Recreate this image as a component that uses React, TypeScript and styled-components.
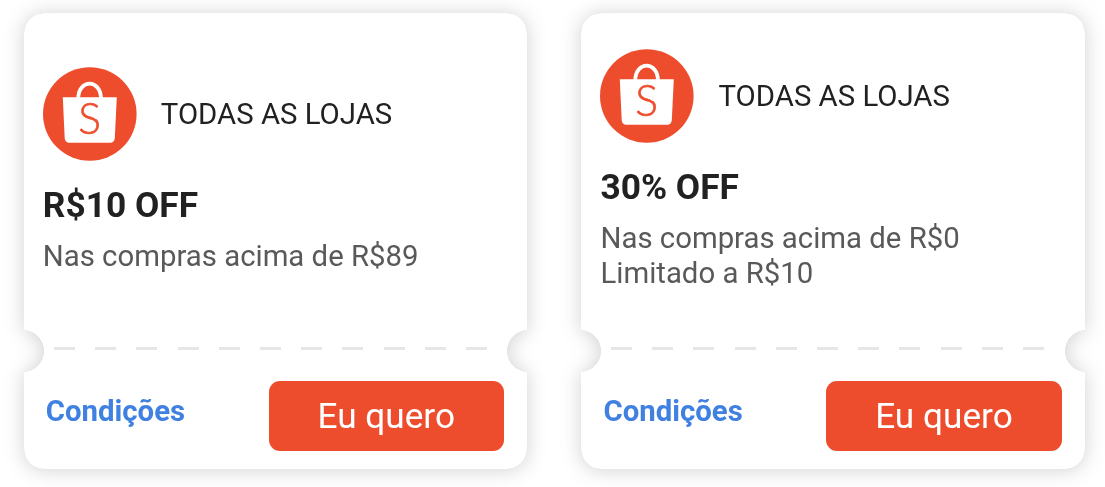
import React from 'react';
import styled, { createGlobalStyle } from 'styled-components'

interface Coupon {
    store: string;
    title: string;
    rules: string[];
}

const coupons: Coupon[] = [
    { store: 'TODAS AS LOJAS', title: 'R$10 OFF', rules: ['Nas compras acima de R$89'] },
    { store: 'TODAS AS LOJAS', title: '30% OFF', rules: ['Nas compras acima de R$0', 'Limitado a R$10'] },
];

const StoreLogo = () => (
    <Logo viewBox="0 0 94 94" aria-hidden="true">
        <circle cx="46.8" cy="47" r="46.8" fill="#ee4d2d" />
        <path d="M35.2 32 C35.2 11.5 58 11.5 58 32" fill="none" stroke="#fff" strokeWidth="3.8" />
        <path d="M19.8 30.3 H73.8 L71.8 71 Q71.5 75.7 67 75.7 H26.5 Q22 75.7 21.7 71 Z" fill="#fff" />
        <LogoLetter x="46.6" y="67.2" textAnchor="middle">S</LogoLetter>
    </Logo>
)

const CouponCard = ({ coupon }: { coupon: Coupon }) => (
    <Shadow>
        <Ticket>
            <Info>
                <Header>
                    <StoreLogo />
                    <Store>{coupon.store}</Store>
                </Header>
                <Title>{coupon.title}</Title>
                <Rules>
                    {coupon.rules.map((rule) => <Rule key={rule}>{rule}</Rule>)}
                </Rules>
            </Info>
            <Perforation />
            <Actions>
                <Conditions href="#">Condições</Conditions>
                <WantButton type="button">Eu quero</WantButton>
            </Actions>
        </Ticket>
    </Shadow>
)

const App = () => {
    return (
    <>
        <GlobalStyle />
        <Page>
            {coupons.map((coupon) => <CouponCard key={coupon.title} coupon={coupon} />)}
        </Page>
    </>
    );
  }

export default App;


const GlobalStyle = createGlobalStyle`
    *, *::before, *::after {
        box-sizing: border-box;
    }
    body {
        margin: 0;
        background-color: #fff;
        font-family: Roboto, sans-serif;
        overflow: hidden;
    }
`
const Page = styled.main`
    display: flex;
    gap: 54.3px;
    height: 487px;
    padding: 12.5px 20px 0 23.8px;
`
const Shadow = styled.article`
    width: 503.4px;
    height: 456.5px;
    flex-shrink: 0;
    filter: drop-shadow(0 0.5px 0.5px rgba(0, 0, 0, 0.16)) drop-shadow(0 1px 10px rgba(0, 0, 0, 0.18));
`
const Ticket = styled.div`
    display: flex;
    flex-direction: column;
    height: 100%;
    border-radius: 20px;
    background-color: #fff;
    /* round bites on both sides, level with the perforation */
    mask-image:
        radial-gradient(circle at -1px 338px, transparent 20.5px, #000 21.2px),
        radial-gradient(circle at calc(100% + 1px) 338px, transparent 20.5px, #000 21.2px);
    mask-composite: intersect;
`
const Info = styled.div`
    display: flex;
    flex-direction: column;
    justify-content: center;
    height: 334.5px;
    padding: 0 19px 18.8px;
`
const Header = styled.div`
    display: flex;
    align-items: center;
    gap: 24px;
`
const Logo = styled.svg`
    display: block;
    width: 94px;
    height: 94px;
`
const LogoLetter = styled.text`
    font-family: Lato, sans-serif;
    font-size: 42.5px;
    font-weight: 300;
    fill: #ee4d2d;
    stroke: #ee4d2d;
    stroke-width: 0.6px;
`
const Store = styled.span`
    color: #212121;
    font-size: 29.35px;
    line-height: 34px;
`
const Title = styled.h2`
    margin: 24px 0 0;
    color: #212121;
    font-size: 35.3px;
    font-weight: 700;
    line-height: 41px;
`
const Rules = styled.div`
    margin-top: 13px;
`
const Rule = styled.p`
    margin: 0;
    color: #595959;
    font-size: 29.35px;
    line-height: 35px;
`
const Perforation = styled.div`
    height: 3px;
    margin: 0 40px 0 30px;
    background-image: repeating-linear-gradient(to right, #e6e6e6 0 21px, transparent 21px 41.2px);
`
const Actions = styled.div`
    display: flex;
    justify-content: space-between;
    align-items: flex-start;
    padding: 30.5px 23.2px 0 22px;
`
const Conditions = styled.a`
    margin-top: 13px;
    color: #4080e0;
    font-size: 29.35px;
    font-weight: 700;
    line-height: 34px;
    text-decoration: none;
`
const WantButton = styled.button`
    width: 235.5px;
    height: 70.5px;
    padding: 0;
    border: 0;
    border-radius: 11px;
    background-color: #ee4d2d;
    color: #fff;
    font-family: inherit;
    font-size: 35.2px;
    cursor: pointer;
`
